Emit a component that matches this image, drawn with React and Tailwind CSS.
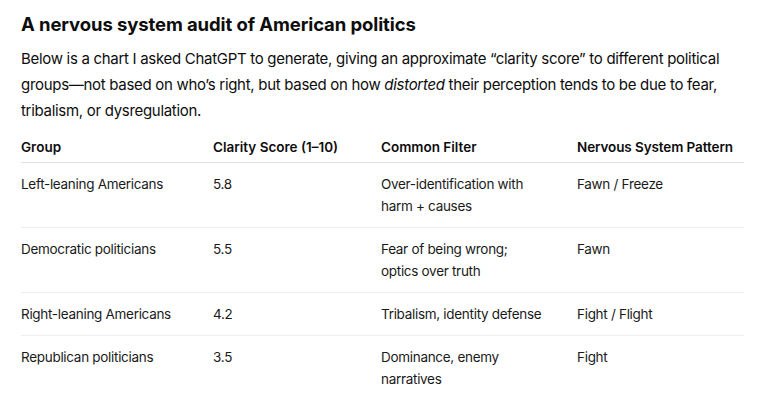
export default function App() {
  const rows = [
    ["Left-leaning Americans", "5.8", ["Over-identification with", "harm + causes"], "Fawn / Freeze"],
    ["Democratic politicians", "5.5", ["Fear of being wrong;", "optics over truth"], "Fawn"],
    ["Right-leaning Americans", "4.2", ["Tribalism, identity defense"], "Fight / Flight"],
    ["Republican politicians", "3.5", ["Dominance, enemy", "narratives"], "Fight"],
  ];
  return (
    <div className="bg-white w-[768px] h-[409px] overflow-hidden px-[21px] text-[#0d0d0d]" style={{ fontFamily: "Inter, 'Noto Sans', sans-serif" }}>
      <h2 className="pt-[10px] text-[18.5px] leading-[28px] font-bold tracking-[-0.1px] whitespace-nowrap">A nervous system audit of American politics</h2>
      <p className="mt-[8px] text-[15px] leading-[26px] tracking-[-0.3px] whitespace-nowrap">
        Below is a chart I asked ChatGPT to generate, giving an approximate “clarity score” to different political
        <br />
        groups—not based on who’s right, but based on how <em>distorted</em> their perception tends to be due to fear,
        <br />
        tribalism, or dysregulation.
      </p>
      <table className="mt-[8px] w-[723px] table-fixed border-collapse text-[13.5px] leading-[22px] tracking-[-0.3px]">
        <colgroup>
          <col className="w-[192px]" />
          <col className="w-[168px]" />
          <col className="w-[196px]" />
          <col className="w-[167px]" />
        </colgroup>
        <thead>
          <tr className="border-b border-[#e0e0e0]">
            <th className="text-left font-semibold py-[4px] px-0 tracking-[0px]">Group</th>
            <th className="text-left font-semibold py-[4px] px-0 tracking-[0px]">Clarity Score (1–10)</th>
            <th className="text-left font-semibold py-[4px] px-0 tracking-[0px]">Common Filter</th>
            <th className="text-left font-semibold py-[4px] px-0 tracking-[-0.1px] whitespace-nowrap">Nervous System Pattern</th>
          </tr>
        </thead>
        <tbody>
          {rows.map((r, i) => (
            <tr key={i} className={i < rows.length - 1 ? "border-b border-[#eeeeee]" : ""}>
              <td className="align-top py-[10px] text-[#1a1a1a]">{r[0]}</td>
              <td className="align-top py-[10px] text-[#1a1a1a]">{r[1]}</td>
              <td className="align-top py-[10px] text-[#1a1a1a]">
                {r[2].map((l, j) => (
                  <div key={j}>{l}</div>
                ))}
              </td>
              <td className="align-top py-[10px] text-[#1a1a1a]">{r[3]}</td>
            </tr>
          ))}
        </tbody>
      </table>
    </div>
  );
}
